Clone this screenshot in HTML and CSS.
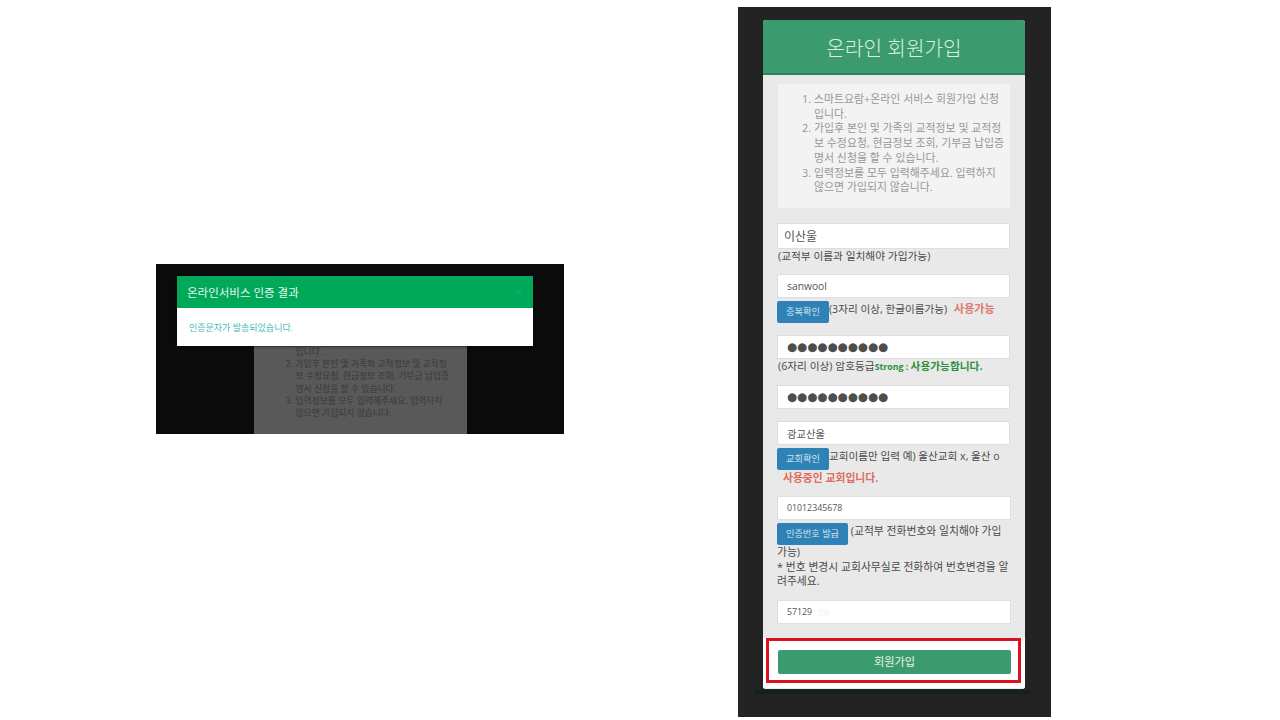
FILE: index.html
```html
<!DOCTYPE html>
<html lang="ko">
<head>
<meta charset="utf-8">
<title>온라인 회원가입</title>
<link rel="stylesheet" href="styles.css">
</head>
<body>
<main class="slide">
  <section class="shot shot-modal">
    <div class="dim-page">
      <ol class="dim-list">
        <li class="dim-cont">입니다.</li>
        <li>가입후 본인 및 가족의 교적정보 및 교적정<br>보 수정요청, 현금정보 조회, 기부금 납입증<br>명서 신청을 할 수 있습니다.</li>
        <li>입력정보를 모두 입력해주세요. 입력하지<br>않으면 가입되지 않습니다.</li>
      </ol>
    </div>
    <div class="modal">
      <div class="modal-head"><span>온라인서비스 인증 결과</span><span class="modal-x">×</span></div>
      <div class="modal-body">인증문자가 발송되었습니다.</div>
    </div>
  </section>

  <section class="shot shot-phone">
    <div class="card">
      <h1 class="card-head">온라인 회원가입</h1>
      <div class="card-body">
        <ol class="notes">
          <li>스마트요람+온라인 서비스 회원가입 신청<br>입니다.</li>
          <li>가입후 본인 및 가족의 교적정보 및 교적정<br>보 수정요청, 현금정보 조회, 기부금 납입증<br>명서 신청을 할 수 있습니다.</li>
          <li>입력정보를 모두 입력해주세요. 입력하지<br>않으면 가입되지 않습니다.</li>
        </ol>

        <div class="field f-name">
          <div class="input input-name">이산울</div>
          <p class="hint">(교적부 이름과 일치해야 가입가능)</p>
        </div>
        <div class="field f-id">
          <div class="input input-id">sanwool</div>
          <div class="row"><span class="btn btn-s">중복확인</span><span class="row-text">(3자리 이상, 한글이름가능)</span><b class="ok-red">사용가능</b></div>
        </div>
        <div class="field f-pw">
          <div class="input input-dots">●●●●●●●●●●</div>
          <p class="hint">(6자리 이상) 암호등급<b class="green-s">Strong : </b><b class="green">사용가능합니다.</b></p>
        </div>
        <div class="field f-pw2">
          <div class="input input-dots">●●●●●●●●●●</div>
        </div>
        <div class="field f-church">
          <div class="input input-id">광교산울</div>
          <div class="row"><span class="btn btn-s">교회확인</span><span class="row-text tight">교회이름만 입력 예) 울산교회 x, 울산 o</span></div>
          <p class="used">사용중인 교회입니다.</p>
        </div>
        <div class="field f-phone">
          <div class="input input-small">01012345678</div>
          <p class="wrap"><span class="btn btn-w">인증번호 발급</span> (교적부 전화번호와 일치해야 가입<br>가능)<br>* 번호 변경시 교회사무실로 전화하여 번호변경을 알<br>려주세요.</p>
        </div>
        <div class="field f-code">
          <div class="input input-small">57129 <span class="blur">인증</span></div>
        </div>
      </div>
      <div class="card-foot">
        <div class="submit-frame"><div class="submit">회원가입</div></div>
      </div>
    </div>
  </section>
</main>
</body>
</html>
```
FILE: styles.css
```css
* { box-sizing: border-box; }
html, body { margin: 0; padding: 0; background: #fff; }
body { font-family: "Open Sans", "Noto Sans CJK KR", sans-serif; }
.slide { position: relative; width: 1280px; height: 720px; overflow: hidden; background: #fff; }
.shot { position: absolute; overflow: hidden; }

/* left picture */
.shot-modal { left: 156px; top: 264px; width: 408px; height: 170px; background: #0b0b0b; display: flex; justify-content: center; align-items: flex-end; }
.dim-page { width: 213px; height: 88px; background: #595959; padding: 0 10px 0 21px; overflow: hidden; }
.dim-list { margin: 0; padding: 0 0 0 21px; font-size: 8.8px; line-height: 12.2px; color: #383838; white-space: nowrap; counter-reset: list-item 1; }
.dim-cont { list-style: none; counter-increment: none; }
.modal { position: absolute; left: 21px; top: 12px; width: 356px; height: 70px; background: #fff; box-shadow: 0 1px 2px rgba(0,0,0,.5); }
.modal-head { height: 32px; background: #00a85a; color: #e6f7ee; font-size: 11.5px; padding: 0 11px 0 10px; display: flex; justify-content: space-between; align-items: center; }
.modal-x { color: #1fb26c; font-size: 12px; }
.modal-body { padding: 13px 12px 0; font-size: 9px; line-height: 13px; color: #49bdb1; }

/* right picture */
.shot-phone { left: 738px; top: 7px; width: 313px; height: 710px; background: #232323; padding: 13px 26px 0 25px; }
.card { position: relative; display: flex; flex-direction: column; width: 262px; height: 669px; border-radius: 3px; background: #e9e9e9; }
.card::after { content: ""; position: absolute; left: -8px; right: -5px; bottom: -5px; height: 4px; background: #14211b; filter: blur(1px); }
.card-head { margin: 0; height: 55px; flex: none; background: #3c9b6e; border-bottom: 2px solid #33805c; border-radius: 3px 3px 0 0; color: #d9f1e5; font-size: 20.2px; font-weight: 300; line-height: 56px; text-align: center; }
.card-body { flex: 1; padding: 9px 14px 0; }
.notes { margin: 0 1px 15px 1px; padding: 8px 0 12px 36px; height: 124px; background: #f3f3f3; color: #979797; font-size: 10.9px; line-height: 14.7px; white-space: nowrap; }
.field { font-size: 10px; color: #4a4a4a; }
.input { height: 24px; width: 233px; background: #fff; border: 1px solid #dedede; display: flex; align-items: center; color: #555; }
.input-name { font-size: 12px; padding-left: 6px; height: 26px; }
.input-id { font-size: 10.3px; padding-left: 9px; }
.input-dots { font-family: "DejaVu Sans", sans-serif; font-size: 11.6px; padding-left: 9px; color: #4d4d4d; }
.input-small { font-size: 8.8px; padding-left: 9px; width: 234px; }
.blur { color: #f0f0f0; font-size: 7px; margin-left: 5px; }
.hint { margin: 0; padding-left: 1px; font-size: 10.7px; line-height: 14px; color: #4a4a4a; white-space: nowrap; }
.row { display: flex; align-items: flex-start; font-size: 10.6px; margin-top: 3px; white-space: nowrap; }
.row-text { line-height: 14px; margin-top: 1px; }
.btn { display: inline-block; background: #2f82b5; color: #cfe3ee; border-radius: 2px; font-size: 9.2px; height: 22px; line-height: 22px; text-align: center; }
.btn-s { width: 52px; flex: none; }
.btn-w { width: 71px; vertical-align: -2px; }
.ok-red { color: #df7a6b; margin: 1px 0 0 7px; line-height: 14px; font-size: 11px; font-weight: 700; }
.green-s { color: #2b8f3c; font-size: 8.8px; font-weight: 700; }
.green { color: #2b8f3c; font-weight: 700; }
.used { margin: 0; padding-left: 6px; color: #df6b5d; font-size: 10.8px; font-weight: 700; line-height: 15px; }
.wrap { margin: 0; padding-top: 3px; font-size: 10.8px; line-height: 14.6px; white-space: nowrap; }
.f-name { margin-bottom: 11px; }
.f-id { margin-bottom: 12px; }
.f-pw { margin-bottom: 11px; }
.f-pw2 { margin-bottom: 12px; }
.f-church { margin-bottom: 11px; }
.f-phone { margin-bottom: 11px; }
.card-foot { flex: none; height: 51px; background: #fff; padding: 0 4px 6px 3px; border-radius: 0 0 3px 3px; }
.submit-frame { height: 45px; border: 3px solid #d8121f; padding: 9px; }
.submit { width: 233px; height: 24px; background: #3c9b6e; border-radius: 2px; color: #e6f5ec; font-size: 11.2px; line-height: 24px; text-align: center; }
```
